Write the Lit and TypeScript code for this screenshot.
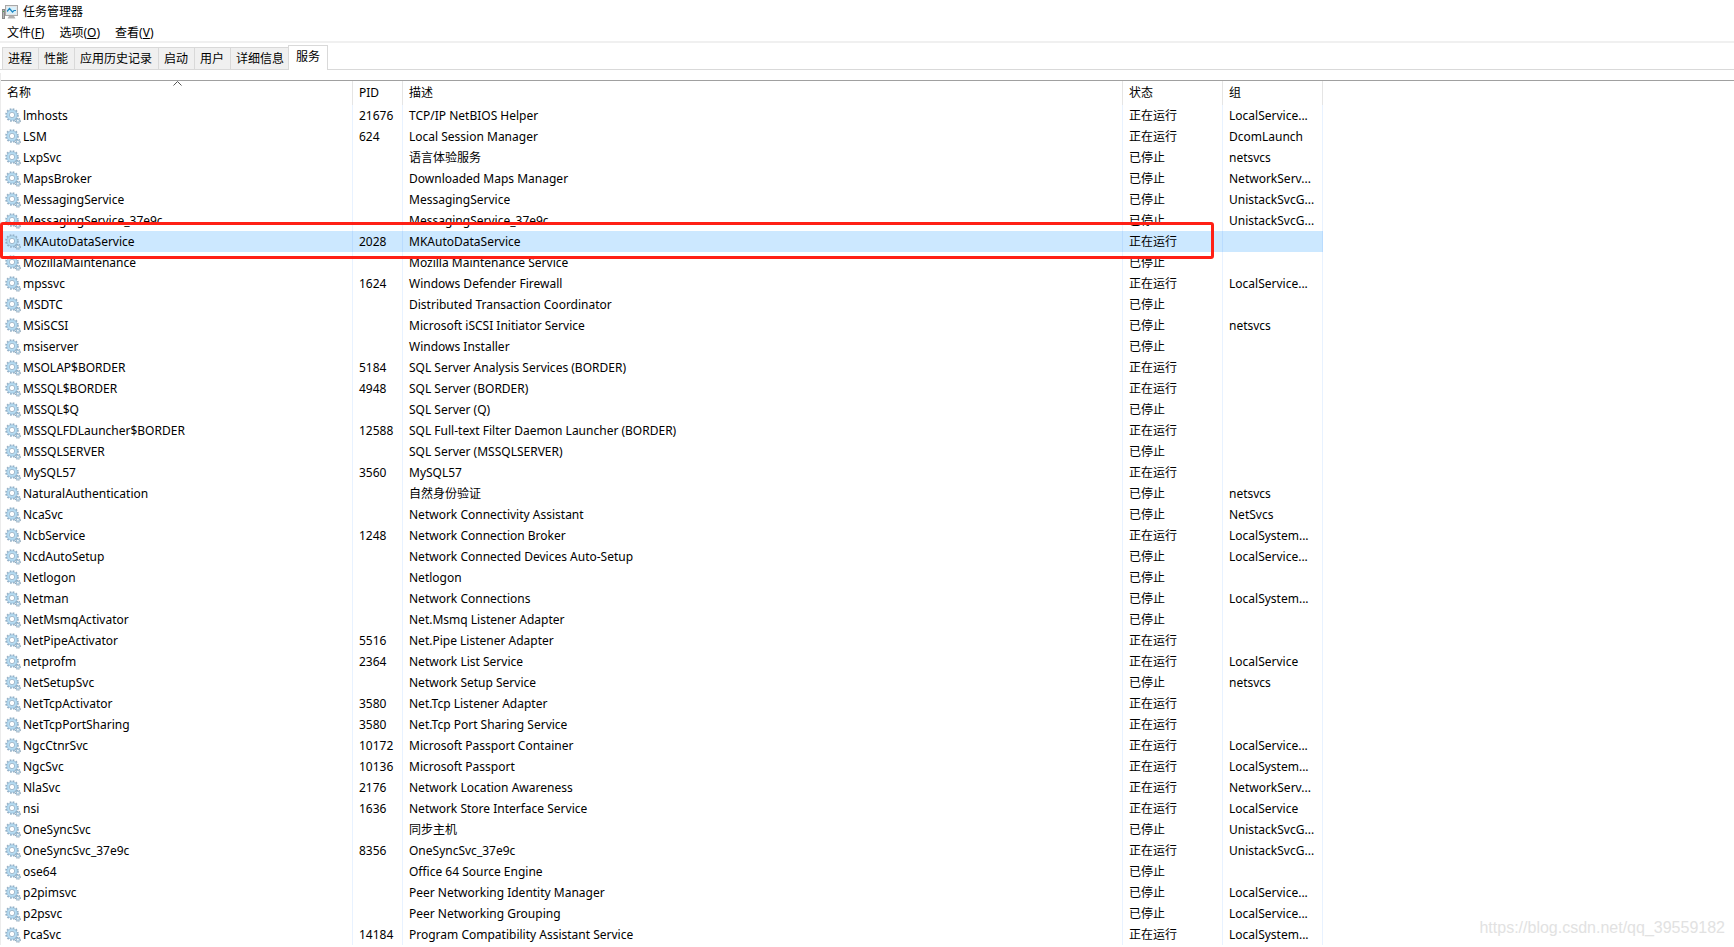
import { LitElement, html, css, svg, nothing } from "lit";
import { customElement, property } from "lit/decorators.js";
import { classMap } from "lit/directives/class-map.js";

type Service = [name: string, pid: string, description: string, running: boolean, group: string];

const SERVICES: Service[] = [
  ["lmhosts", "21676", "TCP/IP NetBIOS Helper", true, "LocalService..."],
  ["LSM", "624", "Local Session Manager", true, "DcomLaunch"],
  ["LxpSvc", "", "语言体验服务", false, "netsvcs"],
  ["MapsBroker", "", "Downloaded Maps Manager", false, "NetworkServ..."],
  ["MessagingService", "", "MessagingService", false, "UnistackSvcG..."],
  ["MessagingService_37e9c", "", "MessagingService_37e9c", false, "UnistackSvcG..."],
  ["MKAutoDataService", "2028", "MKAutoDataService", true, ""],
  ["MozillaMaintenance", "", "Mozilla Maintenance Service", false, ""],
  ["mpssvc", "1624", "Windows Defender Firewall", true, "LocalService..."],
  ["MSDTC", "", "Distributed Transaction Coordinator", false, ""],
  ["MSiSCSI", "", "Microsoft iSCSI Initiator Service", false, "netsvcs"],
  ["msiserver", "", "Windows Installer", false, ""],
  ["MSOLAP$BORDER", "5184", "SQL Server Analysis Services (BORDER)", true, ""],
  ["MSSQL$BORDER", "4948", "SQL Server (BORDER)", true, ""],
  ["MSSQL$Q", "", "SQL Server (Q)", false, ""],
  ["MSSQLFDLauncher$BORDER", "12588", "SQL Full-text Filter Daemon Launcher (BORDER)", true, ""],
  ["MSSQLSERVER", "", "SQL Server (MSSQLSERVER)", false, ""],
  ["MySQL57", "3560", "MySQL57", true, ""],
  ["NaturalAuthentication", "", "自然身份验证", false, "netsvcs"],
  ["NcaSvc", "", "Network Connectivity Assistant", false, "NetSvcs"],
  ["NcbService", "1248", "Network Connection Broker", true, "LocalSystem..."],
  ["NcdAutoSetup", "", "Network Connected Devices Auto-Setup", false, "LocalService..."],
  ["Netlogon", "", "Netlogon", false, ""],
  ["Netman", "", "Network Connections", false, "LocalSystem..."],
  ["NetMsmqActivator", "", "Net.Msmq Listener Adapter", false, ""],
  ["NetPipeActivator", "5516", "Net.Pipe Listener Adapter", true, ""],
  ["netprofm", "2364", "Network List Service", true, "LocalService"],
  ["NetSetupSvc", "", "Network Setup Service", false, "netsvcs"],
  ["NetTcpActivator", "3580", "Net.Tcp Listener Adapter", true, ""],
  ["NetTcpPortSharing", "3580", "Net.Tcp Port Sharing Service", true, ""],
  ["NgcCtnrSvc", "10172", "Microsoft Passport Container", true, "LocalService..."],
  ["NgcSvc", "10136", "Microsoft Passport", true, "LocalSystem..."],
  ["NlaSvc", "2176", "Network Location Awareness", true, "NetworkServ..."],
  ["nsi", "1636", "Network Store Interface Service", true, "LocalService"],
  ["OneSyncSvc", "", "同步主机", false, "UnistackSvcG..."],
  ["OneSyncSvc_37e9c", "8356", "OneSyncSvc_37e9c", true, "UnistackSvcG..."],
  ["ose64", "", "Office 64 Source Engine", false, ""],
  ["p2pimsvc", "", "Peer Networking Identity Manager", false, "LocalService..."],
  ["p2psvc", "", "Peer Networking Grouping", false, "LocalService..."],
  ["PcaSvc", "14184", "Program Compatibility Assistant Service", true, "LocalSystem..."],
];

const SELECTED = "MKAutoDataService";
const TABS = ["进程", "性能", "应用历史记录", "启动", "用户", "详细信息", "服务"];
const MENUS = [["文件", "F"], ["选项", "O"], ["查看", "V"]];

const gearIcon = svg`
  <circle cx="7" cy="7" r="5.9" fill="none" stroke="#93afc4" stroke-width="1.8" stroke-dasharray="1.7 1.39"/>
  <circle cx="7" cy="7" r="4" fill="none" stroke="#b6dcf2" stroke-width="2.6"/>
  <circle cx="7" cy="7" r="5.2" fill="none" stroke="#8fb6d3" stroke-width=".6"/>
  <circle cx="7" cy="7" r="2.7" fill="#fff" stroke="#7f9fb9" stroke-width=".7"/>
  <circle cx="12.9" cy="12.7" r="2.4" fill="none" stroke="#8aa1b3" stroke-width="1.2" stroke-dasharray="1.1 .78"/>
  <circle cx="12.9" cy="12.7" r="1.5" fill="#fff" stroke="#9dbfd6" stroke-width="1.3"/>`;

@customElement("window-title")
export class WindowTitle extends LitElement {
  static styles = css`
    .bar { display: flex; align-items: center; gap: 5px; height: 24px; padding-left: 2px; }
    .icon { width: 16px; height: 16px; }
    .text { font-size: 12px; font-weight: 400; margin: 0; line-height: 24px; }
  `;
  render() {
    return html`<header class="bar">
      <svg class="icon" viewBox="0 0 16 16" aria-hidden="true">
        <rect x=".5" y="5.5" width="2" height="9" fill="#b5b5b5" stroke="#8a8a8a"/>
        <path d="M1 7.500h1" stroke="#4da64d"/>
        <path d="M7 12h5l1.500 2.500H5.500z" fill="#b0b0b0"/>
        <rect x="3.500" y="1.500" width="12" height="10" fill="#e6e6e6" stroke="#a8a8a8"/>
        <rect x="5" y="3" width="9" height="7" fill="#d9f1fc"/>
        <path d="M5 7.500 7.500 4.500l3 3.500 1.500-1.500h2" fill="none" stroke="#1f86c0" stroke-width="1.200"/>
      </svg>
      <h1 class="text">任务管理器</h1>
    </header>`;
  }
}

@customElement("menu-bar")
export class MenuBar extends LitElement {
  static styles = css`
    .bar { display: flex; gap: 1px; height: 17px; border-bottom: 2px solid #f0f0f0; }
    .item { border: 0; background: none; padding: 0 7px; font: inherit; line-height: 17px; color: #000; }
    .key { text-decoration: underline; }
  `;
  render() {
    return html`<nav class="bar">
      ${MENUS.map(([label, key]) => html`<button class="item">${label}(<span class="key">${key}</span>)</button>`)}
    </nav>`;
  }
}

@customElement("tab-strip")
export class TabStrip extends LitElement {
  static styles = css`
    .strip { display: flex; align-items: flex-end; height: 27px; padding-left: 2px; box-shadow: inset 0 -1px #d9d9d9; }
    .tab {
      box-sizing: border-box; height: 23px; padding: 0 6px 0 5px; font: inherit; line-height: 21px; color: #000;
      background: #f0f0f0; border: 1px solid #d9d9d9; border-right: 0;
    }
    .active {
      height: 25px; margin-left: -2px; padding: 0 7px 4px; background: #fff;
      border-right: 1px solid #d9d9d9; border-bottom: 0;
    }
  `;
  render() {
    return html`<div class="strip" role="tablist">
      ${TABS.map((t, i) => {
        const active = i === TABS.length - 1;
        return html`<button role="tab" aria-selected=${active} class=${classMap({ tab: true, active })}>${t}</button>`;
      })}
    </div>`;
  }
}

@customElement("service-table")
export class ServiceTable extends LitElement {
  @property({ attribute: false }) services: Service[] = [];
  static styles = css`
    :host { display: block; }
    .frame { position: relative; margin-top: 3px; padding-top: 7px; box-shadow: inset 1px 0 #ececec; }
    .scroller { margin-left: 1px; border-top: 1px solid #a0a0a0; }
    .table { border-collapse: separate; border-spacing: 0; table-layout: fixed; width: 1322px; }
    .name { width: 352px; }
    .pid { width: 50px; }
    .desc { width: 720px; }
    .state, .group { width: 100px; }
    .head {
      position: relative; box-sizing: border-box; height: 24px; padding: 0 6px; line-height: 16px;
      text-align: left; font-weight: 400; border-right: 1px solid #e5e5e5;
    }
    .sort { position: absolute; top: 0; left: calc(50% - 4px); width: 9px; height: 5px; }
    .cell {
      box-sizing: border-box; height: 21px; padding: 0 6px; line-height: 16px; vertical-align: middle;
      white-space: nowrap; border-right: 1px solid #e8f2ff;
    }
    .first { padding-left: 4px; }
    .label { display: flex; align-items: center; gap: 2px; height: 16px; }
    .gear { width: 16px; height: 16px; flex: none; }
    .selected .cell { background: #cce8ff; border-right-color: #b9dcff; }
    .mark {
      position: absolute; top: 149px; left: 0; width: 1214px; height: 37px; box-sizing: border-box;
      border: 3px solid #ff2015; border-radius: 3px; pointer-events: none;
    }
  `;
  render() {
    return html`<div class="frame">
      <div class="scroller">
        <table class="table">
          <thead>
            <tr>
              <th class="head name">名称
                <svg class="sort" viewBox="0 0 9 5" aria-hidden="true"><path d="M.5 4.500 4.500.5l4 4" fill="none" stroke="#555"/></svg>
              </th>
              <th class="head pid">PID</th>
              <th class="head desc">描述</th>
              <th class="head state">状态</th>
              <th class="head group">组</th>
            </tr>
          </thead>
          <tbody>
            ${this.services.map(([name, pid, desc, running, group]) => html`
              <tr class=${name === SELECTED ? "selected" : nothing}>
                <td class="cell first"><span class="label"><svg class="gear" viewBox="0 0 16 16" aria-hidden="true">${gearIcon}</svg>${name}</span></td>
                <td class="cell">${pid}</td>
                <td class="cell">${desc}</td>
                <td class="cell">${running ? "正在运行" : "已停止"}</td>
                <td class="cell">${group}</td>
              </tr>`)}
          </tbody>
        </table>
      </div>
      <div class="mark"></div>
    </div>`;
  }
}

@customElement("app-root")
export class AppRoot extends LitElement {
  static styles = css`
    :host {
      display: block; position: relative; min-height: 100vh; background: #fff; color: #000;
      font: 12px/16px "Noto Sans", "Noto Sans CJK SC", sans-serif;
    }
    .watermark {
      position: absolute; right: 9px; bottom: 9px; font: 16px/20px "Liberation Sans", sans-serif;
      color: #e2e2e2;
    }
  `;
  render() {
    return html`
      <window-title></window-title>
      <menu-bar></menu-bar>
      <tab-strip></tab-strip>
      <service-table .services=${SERVICES}></service-table>
      <div class="watermark">https://blog.csdn.net/qq_39559182</div>
    `;
  }
}
